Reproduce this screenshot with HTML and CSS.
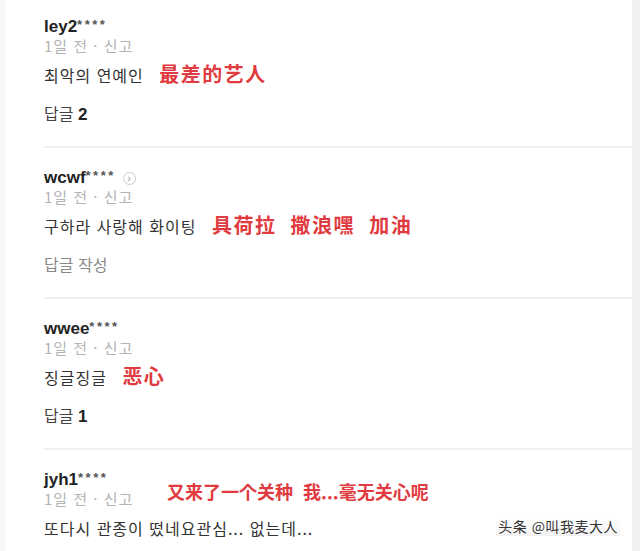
FILE: index.html
```html
<!DOCTYPE html>
<html lang="ko">
<head>
    <meta charset="UTF-8">
    <meta name="viewport" content="width=device-width, initial-scale=1.0">
    <title>댓글</title>
    <link rel="stylesheet" href="styles.css">
</head>
<body>
    <div class="page">
        <div class="comment first">
            <div class="user">ley2<span class="stars">****</span></div>
            <div class="meta">1일 전 · 신고</div>
            <div class="text">최악의 연예인 <span class="note">最差的艺人</span></div>
            <div class="reply">답글 <b>2</b></div>
        </div>
        <div class="comment">
            <div class="user">wcwf<span class="stars">****</span> <span class="more">&rsaquo;</span></div>
            <div class="meta">1일 전 · 신고</div>
            <div class="text">구하라 사랑해 화이팅 <span class="note">具荷拉&nbsp;&nbsp;撒浪嘿&nbsp;&nbsp;加油</span></div>
            <div class="reply muted">답글 작성</div>
        </div>
        <div class="comment">
            <div class="user">wwee<span class="stars">****</span></div>
            <div class="meta">1일 전 · 신고</div>
            <div class="text">징글징글 <span class="note">恶心</span></div>
            <div class="reply">답글 <b>1</b></div>
        </div>
        <div class="comment last">
            <div class="user">jyh1<span class="stars">****</span></div>
            <div class="meta">1일 전 · 신고</div>
            <div class="text">또다시 관종이 떴네요관심... 없는데...</div>
            <span class="note overlay">又来了一个关种&nbsp;&nbsp;我...毫无关心呢</span>
        </div>
        <div class="watermark">头条 @叫我麦大人</div>
    </div>
</body>
</html>
```

FILE: styles.css
```css
body {
    margin: 0;
    background: #fff;
    font-family: "Noto Sans CJK KR", "Noto Sans", sans-serif;
    color: #333;
}

.page {
    position: relative;
    height: 551px;
    overflow: hidden;
    border-left: 5px solid #f7f7f7;
    border-right: 8px solid #f1f1f1;
}

.comment {
    position: relative;
    margin-left: 39px;
    padding: 20px 0 22px;
    border-bottom: 2px solid #efefef;
}

.comment.first {
    padding-top: 17px;
}

.comment.last {
    border-bottom: none;
}

.user {
    height: 20px;
    font-family: "Liberation Sans", "Noto Sans CJK KR", sans-serif;
    font-weight: bold;
    font-size: 17px;
    line-height: 20px;
    color: #222;
}

.stars {
    font-size: 13px;
    line-height: 1;
    vertical-align: 3px;
    color: #555;
    letter-spacing: 2.5px;
}

.more {
    display: inline-block;
    width: 11px;
    height: 11px;
    border: 1px solid #ccc;
    border-radius: 50%;
    font-size: 11px;
    line-height: 10px;
    text-align: center;
    color: #999;
    font-weight: normal;
    vertical-align: 1px;
    margin-left: 2px;
}

.meta {
    height: 18px;
    font-size: 15px;
    line-height: 18px;
    letter-spacing: 1px;
    color: #b3b3b3;
}

.text {
    height: 26px;
    font-size: 16px;
    line-height: 26px;
    letter-spacing: 1px;
    margin-top: 7px;
    color: #333;
    white-space: nowrap;
}

.note {
    font-weight: bold;
    font-size: 20px;
    line-height: 1;
    letter-spacing: 1.5px;
    color: #df3b40;
    margin-left: 10px;
}

.overlay {
    position: absolute;
    left: 123px;
    top: 32px;
    font-size: 18px;
    letter-spacing: 0;
    margin-left: 0;
}

.reply {
    height: 22px;
    font-size: 16px;
    line-height: 22px;
    margin-top: 14px;
    color: #444;
}

.reply b {
    font-family: "Liberation Sans", sans-serif;
    font-size: 17px;
    line-height: 1;
    color: #222;
}

.reply.muted {
    color: #888;
}

.watermark {
    position: absolute;
    right: 12px;
    bottom: 15px;
    padding: 0 2px;
    font-size: 14px;
    line-height: 20px;
    letter-spacing: 0.5px;
    color: #333;
    text-shadow: 0 0 2px #fff, 0 0 2px #fff;
    background: linear-gradient(to bottom, rgba(240, 240, 240, 0), #f2f2f2);
}
```
